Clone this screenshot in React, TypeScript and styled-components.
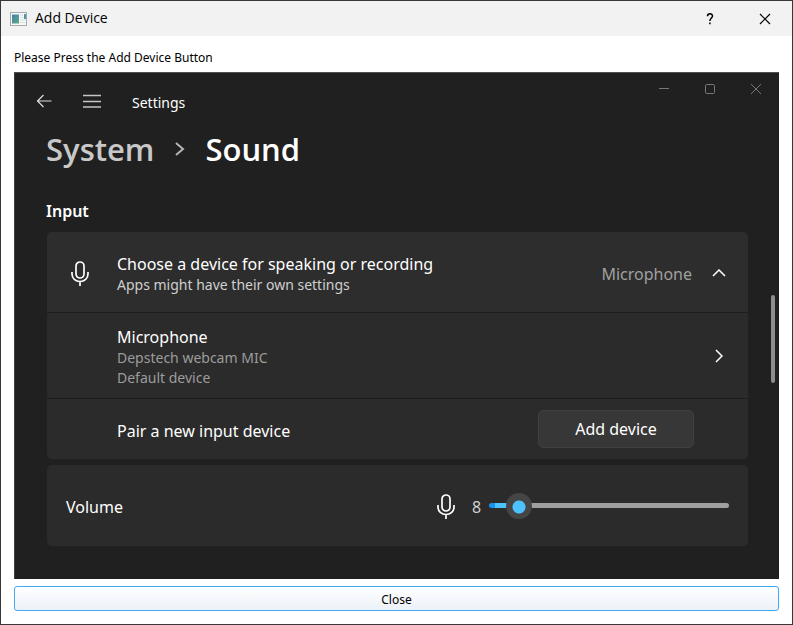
import React, { useState } from "react";
import styled, { createGlobalStyle } from "styled-components";

const Global = createGlobalStyle`
  * { box-sizing: border-box; }
  html, body, #root { height: 100%; margin: 0; }
  body { background: #fff; }
  button { font: inherit; color: inherit; }
`;

const Dialog = styled.main`
  min-height: 100%;
  display: flex;
  flex-direction: column;
  border: 1px solid #38363a;
  background: #fff;
  color: #000;
  font: 12px/16px "Noto Sans", sans-serif;
`;

const TitleBar = styled.header`
  display: flex;
  align-items: center;
  height: 35px;
  padding-left: 9px;
  background: #f2f2f2;
`;

const DialogTitle = styled.h1`
  flex: 1;
  margin: 0 0 1px 8px;
  font: 400 14px/20px "Open Sans", sans-serif;
`;

const CaptionButton = styled.button<{ $width: number }>`
  display: grid;
  place-items: center;
  width: ${(p) => p.$width}px;
  height: 32px;
  padding: 0;
  border: 0;
  background: none;
`;

const Body = styled.div`
  flex: 1;
  display: flex;
  flex-direction: column;
  padding: 14px 13px 13px;
`;

const Prompt = styled.p`
  margin: 0 0 6px;
`;

const CloseButton = styled.button`
  height: 25px;
  margin-top: 7px;
  padding: 2px 0 0;
  border: 1px solid #41a9f8;
  border-radius: 3px;
  background: linear-gradient(#fff, #ebf1f8);
`;

const Settings = styled.section`
  flex: 1;
  display: flex;
  flex-direction: column;
  border-top: 1px solid #514c4d;
  border-left: 1px solid #3b4144;
  background: #202020;
  color: #fff;
  font: 16px/24px "Noto Sans", sans-serif;
`;

const SettingsBar = styled.header`
  display: flex;
  justify-content: space-between;
`;

const NavGroup = styled.div`
  display: flex;
  align-items: center;
  padding: 15px 0 0 20px;
`;

const IconButton = styled.button`
  display: grid;
  place-items: center;
  width: 18px;
  height: 24px;
  margin: 0 30px 1px 0;
  padding: 0;
  border: 0;
  background: none;
`;

const AppName = styled.span`
  padding: 3px 0 0 1px;
  font-size: 14px;
  line-height: 24px;
`;

const WindowButtons = styled.div`
  display: flex;
  color: #777;
`;

const Content = styled.div`
  flex: 1;
  display: flex;
`;

const Page = styled.div`
  flex: 1;
  padding: 10px 23px 0 31px;
`;

const Crumbs = styled.nav`
  display: flex;
  align-items: center;
  gap: 20px;
  font-size: 31px;
  font-weight: 600;
  line-height: 48px;
  font-family: "Open Sans", sans-serif;
`;

const CrumbLink = styled.a`
  color: #c8c8c8;
  text-decoration: none;
`;

const SectionTitle = styled.h2`
  margin: 26px 0 9px;
  font-size: 16px;
  font-weight: 600;
  line-height: 24px;
`;

const Card = styled.div`
  border-radius: 5px;
  margin: 0 0 6px 1px;
  background: #2b2b2b;
  overflow: hidden;
`;

const Row = styled.div<{ $height: number; $head?: boolean }>`
  display: flex;
  align-items: center;
  min-height: ${(p) => p.$height}px;
  padding: 3px 20px 0 70px;
  background: ${(p) => (p.$head ? "#2d2d2d" : "#2b2b2b")};
  ${(p) => (p.$head ? "padding-left: 24px;" : "border-top: 1px solid #1d1d1d;")}
`;

const VolumeRow = styled.div`
  display: flex;
  align-items: center;
  min-height: 81px;
  padding: 2px 19px 0 19px;
`;

const RowText = styled.div<{ $indent?: boolean }>`
  flex: 1;
  padding-left: ${(p) => (p.$indent ? 28 : 0)}px;
`;

const Label = styled.div`
  font-size: 16px;
  line-height: 22px;
`;

const Detail = styled.div<{ $bright?: boolean }>`
  font-size: 14px;
  line-height: 20px;
  color: ${(p) => (p.$bright ? "#cfcfcf" : "#9c9c9c")};
`;

const Current = styled.span`
  margin-right: 18px;
  color: #a0a0a0;
`;

const RowButton = styled.button`
  display: grid;
  place-items: center;
  width: 18px;
  height: 24px;
  margin-bottom: 2px;
  padding: 0;
  border: 0;
  background: none;
`;

const AddButton = styled.button`
  width: 156px;
  height: 38px;
  margin: 0 34px 4px 0;
  padding: 0;
  border: 1px solid #3f3f3f;
  border-radius: 5px;
  background: #373737;
`;

const VolumeLabel = styled.label`
  flex: 1;
`;

const VolumeValue = styled.output`
  width: 10px;
  margin: 0 7px 0 17px;
  color: #cfcfcf;
`;

const Slider = styled.input`
  appearance: none;
  width: 240px;
  height: 26px;
  margin: 0 0 2px;
  background: none;
  &::-webkit-slider-runnable-track {
    height: 5px;
    border-radius: 3px;
    background: linear-gradient(90deg, #1a90ec 0 6px, #4cc2ff 6px 28px, #9f9f9f 28px);
  }
  &::-webkit-slider-thumb {
    appearance: none;
    width: 26px;
    height: 26px;
    margin-top: -10px;
    border-radius: 50%;
    background: radial-gradient(circle at 13px 14px, #4cc2ff 0 6px, #454545 7px);
  }
`;

const ScrollRail = styled.div`
  width: 8px;
  padding-top: 180px;
`;

const ScrollThumb = styled.div`
  width: 4px;
  height: 88px;
  border-radius: 2px;
  background: #8d8d8d;
`;

function Mic() {
  return (
    <svg width="18" height="25" viewBox="0 0 18 25" fill="none" stroke="#fff" strokeWidth="1.7" aria-hidden="true">
      <rect x="5" y="1" width="8" height="16" rx="4" />
      <path d="M1 11v2c0 4.500 3.500 7.500 8 7.500s8-3 8-7.500v-2M9 20.500V25" />
    </svg>
  );
}

export default function App() {
  const [volume, setVolume] = useState(8);
  return (
    <>
      <Global />
      <Dialog>
        <TitleBar>
          <svg width="17" height="14" viewBox="0 0 17 14" aria-hidden="true">
            <defs>
              <linearGradient id="screen" x1="0" y1="0" x2="1" y2="1">
                <stop offset="0" stopColor="#4580ad" />
                <stop offset="1" stopColor="#5cac82" />
              </linearGradient>
            </defs>
            <rect x=".5" y=".5" width="16" height="13" fill="#f7f9f9" stroke="#a4aaad" />
            <path d="M2 2.500h7v9H2z" fill="url(#screen)" />
            <path d="M10 3h3M10 5.500h3M10 8h5M10 10.500h5" stroke="#d9dddd" />
            <path d="M14 2h2v5h-2z" fill="#4d94ad" />
          </svg>
          <DialogTitle>Add Device</DialogTitle>
          <CaptionButton $width={56} aria-label="Help">
            <svg width="8" height="12" viewBox="0 0 8 12" fill="none" stroke="#000" strokeWidth="1.500" aria-hidden="true">
              <path d="M1.500 3.200C1.500 0 6.500 0 6.500 3c0 2-2.600 2.200-2.600 5M3.900 9.500v1.700" />
            </svg>
          </CaptionButton>
          <CaptionButton $width={54} aria-label="Close window">
            <svg width="12" height="12" viewBox="0 0 12 12" stroke="#000" strokeWidth="1.200" aria-hidden="true">
              <path d="M1 1l10 10M11 1L1 11" />
            </svg>
          </CaptionButton>
        </TitleBar>
        <Body>
          <Prompt>Please Press the Add Device Button</Prompt>
          <Settings>
            <SettingsBar>
              <NavGroup>
                <IconButton aria-label="Back">
                  <svg width="16" height="14" viewBox="0 0 16 14" fill="none" stroke="#ddd" strokeWidth="1.200" aria-hidden="true">
                    <path d="M15.500 7H1.500M7.500 1l-6 6 6 6" />
                  </svg>
                </IconButton>
                <IconButton aria-label="Navigation">
                  <svg width="18" height="14" viewBox="0 0 18 14" stroke="#c4c4c4" strokeWidth="1.300" aria-hidden="true">
                    <path d="M0 1.500h18M0 7.500h18M0 13h18" />
                  </svg>
                </IconButton>
                <AppName>Settings</AppName>
              </NavGroup>
              <WindowButtons>
                <CaptionButton $width={46} aria-label="Minimize">
                  <svg width="10" height="10" viewBox="0 0 10 10" stroke="currentColor" aria-hidden="true">
                    <path d="M0 4.500h10" />
                  </svg>
                </CaptionButton>
                <CaptionButton $width={46} aria-label="Maximize">
                  <svg width="10" height="10" viewBox="0 0 10 10" fill="none" stroke="currentColor" aria-hidden="true">
                    <rect x=".5" y=".5" width="9" height="9" rx="1" />
                  </svg>
                </CaptionButton>
                <CaptionButton $width={46} aria-label="Close settings">
                  <svg width="10" height="10" viewBox="0 0 10 10" stroke="currentColor" aria-hidden="true">
                    <path d="M0 0l10 10M10 0L0 10" />
                  </svg>
                </CaptionButton>
              </WindowButtons>
            </SettingsBar>
            <Content>
              <Page>
                <Crumbs aria-label="Breadcrumb">
                  <CrumbLink href="#system">System</CrumbLink>
                  <svg width="11" height="14" viewBox="0 0 11 14" fill="none" stroke="#b5b5b5" strokeWidth="2" aria-hidden="true">
                    <path d="M2 1l7 6-7 6" />
                  </svg>
                  <span>Sound</span>
                </Crumbs>
                <SectionTitle>Input</SectionTitle>
                <Card>
                  <Row $height={80} $head>
                    <Mic />
                    <RowText $indent>
                      <Label>Choose a device for speaking or recording</Label>
                      <Detail $bright>Apps might have their own settings</Detail>
                    </RowText>
                    <Current>Microphone</Current>
                    <RowButton aria-label="Collapse">
                      <svg width="14" height="8" viewBox="0 0 14 8" fill="none" stroke="#fff" strokeWidth="1.500" aria-hidden="true">
                        <path d="M1 7l6-6 6 6" />
                      </svg>
                    </RowButton>
                  </Row>
                  <Row $height={86}>
                    <RowText>
                      <Label>Microphone</Label>
                      <Detail>Depstech webcam MIC</Detail>
                      <Detail>Default device</Detail>
                    </RowText>
                    <RowButton aria-label="Open microphone">
                      <svg width="8" height="14" viewBox="0 0 8 14" fill="none" stroke="#fff" strokeWidth="1.500" aria-hidden="true">
                        <path d="M1 1l6 6-6 6" />
                      </svg>
                    </RowButton>
                  </Row>
                  <Row $height={61}>
                    <RowText>Pair a new input device</RowText>
                    <AddButton>Add device</AddButton>
                  </Row>
                </Card>
                <Card>
                  <VolumeRow>
                    <VolumeLabel htmlFor="volume">Volume</VolumeLabel>
                    <Mic />
                    <VolumeValue htmlFor="volume">{volume}</VolumeValue>
                    <Slider
                      id="volume"
                      type="range"
                      min={0}
                      max={100}
                      value={volume}
                      onChange={(e) => setVolume(Number(e.target.value))}
                    />
                  </VolumeRow>
                </Card>
              </Page>
              <ScrollRail>
                <ScrollThumb />
              </ScrollRail>
            </Content>
          </Settings>
          <CloseButton>Close</CloseButton>
        </Body>
      </Dialog>
    </>
  );
}
